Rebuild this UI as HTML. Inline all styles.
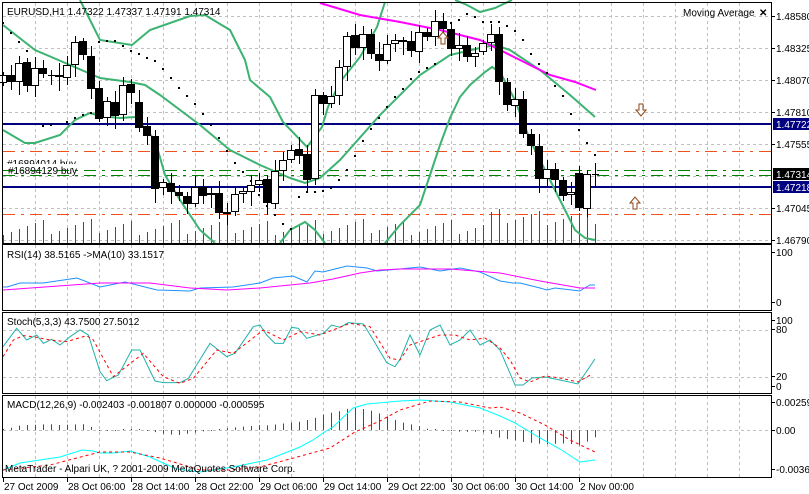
<!DOCTYPE html>
<html><head><meta charset="utf-8"><style>
html,body{margin:0;padding:0;background:#fff;width:809px;height:494px;overflow:hidden}
svg{display:block}
text{font-family:"Liberation Sans",sans-serif;font-size:10px}
</style></head><body>
<svg id="c" width="809" height="494" viewBox="0 0 809 494" xmlns="http://www.w3.org/2000/svg">
<g id="grid"></g>
<g id="draw"></g>
<rect x="2.5" y="2.5" width="769" height="241" fill="none" stroke="#000"/>
<rect x="2.5" y="244.5" width="769" height="66" fill="none" stroke="#000"/>
<rect x="2.5" y="312.5" width="769" height="81" fill="none" stroke="#000"/>
<rect x="2.5" y="395.5" width="769" height="82" fill="none" stroke="#000"/>
<text x="7" y="15">EURUSD,H1  1.47322 1.47337 1.47191 1.47314</text>
<text x="683" y="16">Moving Average</text>
<text x="759" y="16" font-weight="bold">✕</text>
<text x="7" y="167">#16894014 buy</text>
<rect x="7" y="164" width="70" height="4" fill="#fff"/>
<text x="8" y="174">#16894129 buy</text>
<text x="7" y="258">RSI(14) 38.5165  -&gt;MA(10) 33.1517</text>
<text x="7" y="325">Stoch(5,3,3) 43.7500 27.5012</text>
<text x="7" y="408">MACD(12,26,9) -0.002403 -0.001807 0.000000 -0.000595</text>
<text x="5" y="472">MetaTrader - Alpari UK, ? 2001-2009 MetaQuotes Software Corp.</text>
<g id="axis"></g>
</svg>
<script>
var NS="http://www.w3.org/2000/svg";
function el(p,n,a,t){var e=document.createElementNS(NS,n);for(var k in a)e.setAttribute(k,a[k]);if(t!=null)e.textContent=t;document.getElementById(p).appendChild(e);return e;}
function pts(a){return a.map(function(p){return p[0]+","+p[1]}).join(" ");}
function interp(a,x){for(var i=0;i<a.length-1;i++){if(x>=a[i][0]&&x<=a[i+1][0]){var t=(x-a[i][0])/(a[i+1][0]-a[i][0]);return a[i][1]+t*(a[i+1][1]-a[i][1]);}}return x<a[0][0]?a[0][1]:a[a.length-1][1];}
var G="grid",D="draw",A="axis";
for(var x=35;x<771;x+=32){
 [[3,243],[245,310],[313,393],[396,477]].forEach(function(r){el(G,"line",{x1:x+.5,y1:r[0],x2:x+.5,y2:r[1],stroke:"#c0c0c0","stroke-dasharray":"3,3"});});
}
[16,48,80,112,144,176,208,240].forEach(function(y){el(G,"line",{x1:3,y1:y+.5,x2:771,y2:y+.5,stroke:"#c0c0c0","stroke-dasharray":"3,3"});});
[330,377,430].forEach(function(y){el(G,"line",{x1:3,y1:y+.5,x2:771,y2:y+.5,stroke:"#c0c0c0","stroke-dasharray":"3,3"});});
el(G,"line",{x1:3,y1:151.5,x2:771,y2:151.5,stroke:"#f0501e","stroke-dasharray":"12,6,3,6"});
el(G,"line",{x1:3,y1:214.5,x2:771,y2:214.5,stroke:"#f0501e","stroke-dasharray":"12,6,3,6"});
el(G,"line",{x1:3,y1:170.5,x2:771,y2:170.5,stroke:"#008000","stroke-dasharray":"12,6,3,6"});
el(G,"line",{x1:3,y1:175.5,x2:771,y2:175.5,stroke:"#008000","stroke-dasharray":"12,6,3,6"});
el(G,"rect",{x:3,y:123,width:768,height:2,fill:"#000080"});
el(G,"rect",{x:3,y:186,width:768,height:2,fill:"#000080"});
for(var i=0;i<75;i++){var vx=3+8*i,vh=8+((i*37)%17)+(i>60?10:0);el(D,"line",{x1:vx+.5,y1:243-vh,x2:vx+.5,y2:243,stroke:"#008000"});}
var up=[[80,0],[85,10],[100,40],[132,45],[150,30],[190,16],[205,15],[230,30],[245,60],[250,80],[270,97],[283,122],[307,147],[322,127],[328,107],[340,82],[360,57],[377,27],[385,2]];
var up2=[[455,0],[467,5],[480,12],[495,8],[512,0]];
var mid=[[3,25],[35,50],[70,65],[100,78],[130,82],[145,85],[160,95],[200,125],[230,150],[260,165],[290,178],[305,183],[320,178],[340,160],[380,115],[420,75],[450,55],[480,48],[495,45],[510,50],[540,70],[570,95],[595,117]];
var lo=[[3,130],[25,143],[35,143],[60,135],[75,120],[90,113],[100,116],[120,118],[135,117],[155,140],[165,175],[180,200],[200,230],[215,243]];
var lo2=[[280,243],[290,230],[305,222],[315,230],[325,243]];
var lo3=[[385,243],[400,225],[420,205],[430,175],[440,145],[450,118],[460,97],[470,85],[485,72],[492,67],[500,72],[515,100],[530,140],[545,170],[560,200],[575,230],[585,238],[595,240]];
[up,up2,mid,lo,lo2,lo3].forEach(function(a){el(D,"polyline",{points:pts(a),fill:"none",stroke:"#3cb371","stroke-width":2});});
el(D,"polyline",{points:pts([[320,3],[360,15],[400,22],[440,30],[480,40],[500,50],[520,60],[550,75],[575,82],[596,90]]),fill:"none",stroke:"#ff00ff","stroke-width":2});
var C=[[75,83,1],[75,82,0],[63,82,1],[62,86,0],[68,86,1],[68,74,0],[75,76,0],[75,77,0],[65,78,1],[42,65,1],[41,55,0],[56,89,0],[88,119,0],[101,118,1],[102,116,0],[85,115,1],[84,93,0],[102,128,0],[126,136,0],[136,189,0],[182,188,1],[183,192,0],[192,196,0],[196,204,0],[187,204,1],[187,196,0],[193,195,1],[193,213,0],[212,214,0],[194,212,1],[191,194,1],[185,192,1],[180,185,1],[179,203,0],[171,204,1],[160,171,1],[150,160,1],[149,156,0],[154,180,0],[95,179,1],[95,104,0],[96,104,1],[67,96,1],[36,67,1],[35,48,0],[34,48,1],[34,54,0],[54,61,0],[44,61,1],[40,44,1],[40,42,0],[41,51,0],[32,52,1],[32,37,0],[21,37,1],[21,29,0],[29,49,0],[45,49,1],[45,57,0],[53,57,1],[43,52,1],[34,43,1],[34,82,0],[82,105,0],[99,106,1],[99,134,0],[134,146,0],[146,179,0],[169,179,1],[169,180,0],[180,196,0],[192,195,1],[173,208,0],[174,209,1],[174,175,0]];
C.forEach(function(c,i){var x=3+8*i,hi=c[0]-(3+(i*7)%10),lo=c[1]+(3+(i*5)%12);
 el(D,"line",{x1:x+.5,y1:hi,x2:x+.5,y2:lo,stroke:"#000"});
 if(c[1]-c[0]<2){el(D,"line",{x1:x-3,y1:c[0]+.5,x2:x+4,y2:c[0]+.5,stroke:"#000"});}
 else el(D,"rect",{x:x-3.5,y:c[0]+.5,width:7,height:c[1]-c[0]-1,fill:c[2]?"#fff":"#000",stroke:"#000"});});
var S=[[3,23],[11,33],[19,42],[27,51],[43,126],[51,125],[67,122],[75,118],[83,115],[91,113],[99,42],[107,41],[115,41],[123,46],[131,51],[139,54],[147,58],[155,61],[163,69],[171,78],[179,88],[187,96],[195,104],[203,114],[211,125],[219,138],[227,151],[235,163],[243,172],[251,181],[259,195],[267,206],[275,215],[283,224],[291,229],[299,197],[307,192],[315,192],[323,191],[331,188],[339,180],[347,170],[355,156],[363,141],[371,129],[379,118],[387,107],[395,97],[403,89],[411,79],[419,72],[427,68],[435,64],[443,23],[451,23],[459,20],[467,14],[475,17],[483,22],[491,22],[499,22],[507,26],[515,31],[523,40],[531,54],[539,64],[547,73],[555,86],[563,96],[571,114],[579,130],[587,143],[595,155]];
S.forEach(function(p){el(D,"rect",{x:p[0]-1,y:p[1]-1,width:2,height:2,fill:"#000"});});
function arrow(x,y,down){var p=down?[[x-2,y],[x+2,y],[x+2,y+6],[x+5,y+6],[x,y+12],[x-5,y+6],[x-2,y+6]]:[[x-2,y+12],[x+2,y+12],[x+2,y+6],[x+5,y+6],[x,y],[x-5,y+6],[x-2,y+6]];el(D,"polygon",{points:pts(p),fill:"#fff",stroke:"#8b4513"});}
arrow(641,104,1);arrow(635,197,0);arrow(443,32,0);
var rsiB=[[3,287],[7,287],[20,283],[43,283],[77,278],[100,287],[125,282],[157,290],[190,291],[200,288],[233,287],[260,283],[273,278],[293,276],[307,282],[315,271],[323,272],[347,266],[367,268],[377,271],[400,269],[420,267],[440,271],[460,268],[480,272],[500,281],[513,283],[520,283],[540,288],[547,290],[555,288],[580,291],[583,289],[590,285],[595,285]];
var rsiM=[[3,290],[100,283],[150,283],[190,288],[227,290],[260,288],[310,283],[333,279],[360,273],[380,270],[400,269],[450,269],[500,273],[540,281],[580,288],[595,288]];
el(D,"polyline",{points:pts(rsiB),fill:"none",stroke:"#1e90ff"});
el(D,"polyline",{points:pts(rsiM),fill:"none",stroke:"#ff00ff"});
function cv(a){return a.map(function(p){return [p[0]/3,p[1]/3+240]});}
var stT=cv([[9,320],[50,265],[80,300],[110,285],[130,310],[155,298],[180,315],[210,290],[240,270],[265,285],[300,395],[320,422],[355,405],[395,330],[420,330],[465,423],[490,428],[540,428],[565,415],[630,310],[680,350],[705,340],[760,260],[780,255],[800,285],[825,310],[850,310],[875,262],[895,265],[920,295],[970,280],[995,255],[1020,262],[1045,248],[1090,252],[1120,300],[1160,368],[1185,380],[1200,358]]).concat([[410,335],[420,355],[430,330],[440,325],[450,345],[460,340],[470,330],[480,345],[490,340],[500,350],[515,385],[523,385],[532,378],[545,377],[560,380],[578,384],[595,359]]);
var stR=cv([[9,350],[40,300],[70,287],[100,290],[150,300],[200,305],[260,287],[280,300],[340,410],[430,340],[490,410],[540,430],[580,415],[650,330],[700,340],[790,270],[850,300],[900,275],[960,285],[1050,250],[1110,260],[1170,355],[1200,360]]).concat([[410,345],[425,340],[440,335],[455,335],[470,340],[485,338],[500,348],[510,360],[520,378],[530,382],[545,376],[560,378],[578,382],[592,374]]);
el(D,"polyline",{points:pts(stT),fill:"none",stroke:"#20b2aa"});
el(D,"polyline",{points:pts(stR),fill:"none",stroke:"#ff0000","stroke-dasharray":"3,3"});
var mM=[[3,470],[20,463],[60,457],[82,450],[93,451],[100,453],[113,453],[130,451],[150,457],[163,463],[177,469],[200,472],[233,467],[267,460],[300,447],[313,440],[323,433],[333,427],[353,408],[367,404],[400,401],[420,400],[450,402],[480,408],[500,416],[515,423],[540,438],[560,449],[580,462],[595,460]];
var mS=[[3,470],[50,465],[100,452],[130,452],[160,458],[200,470],[230,470],[260,467],[290,459],[330,448],[355,432],[380,421],[400,410],[430,401],[460,402],[490,408],[500,407],[520,413],[545,425],[570,440],[595,452]];
for(var i=0;i<75;i++){var hx=3+8*i,h=(interp(mS,hx)-interp(mM,hx))*0.9;if(Math.abs(h)<1)h=h<0?-1:1;
 el(D,"line",{x1:hx+.5,y1:430,x2:hx+.5,y2:430-h,stroke:h>0?"#008000":"#ff0000"});}
el(D,"polyline",{points:pts(mM),fill:"none",stroke:"#00ffff"});
el(D,"polyline",{points:pts(mS),fill:"none",stroke:"#ff0000","stroke-dasharray":"3,3"});
function lab(y,t){el(A,"line",{x1:771,y1:y+.5,x2:775,y2:y+.5,stroke:"#000"});el(A,"text",{x:776,y:y+4},t);}
[[16,"1.48580"],[48,"1.48325"],[80,"1.48070"],[112,"1.47810"],[144,"1.47555"],[208,"1.47045"],[240,"1.46790"]].forEach(function(l){lab(l[0],l[1]);});
function hl(y,t,bg){el(A,"rect",{x:773,y:y-6,width:36,height:12,fill:bg});el(A,"text",{x:776,y:y+4,style:"fill:#fff"},t);}
hl(124,"1.47722","#000080");hl(174,"1.47314","#000");hl(187,"1.47218","#000080");
[[252,"100"],[302,"0"],[320,"100"],[329,"80"],[376,"20"],[386,"0"],[402,"0.002598"],[430,"0.00"],[469,"-0.003685"]].forEach(function(l){lab(l[0],l[1]);});
[[3,"27 Oct 2009"],[67,"28 Oct 06:00"],[131,"28 Oct 14:00"],[195,"28 Oct 22:00"],[259,"29 Oct 06:00"],[323,"29 Oct 14:00"],[387,"29 Oct 22:00"],[451,"30 Oct 06:00"],[515,"30 Oct 14:00"],[579,"2 Nov 00:00"]].forEach(function(l){
 el(A,"line",{x1:l[0]+.5,y1:478,x2:l[0]+.5,y2:482,stroke:"#000"});el(A,"text",{x:l[0]+1,y:490},l[1]);});
</script>
</body></html>
